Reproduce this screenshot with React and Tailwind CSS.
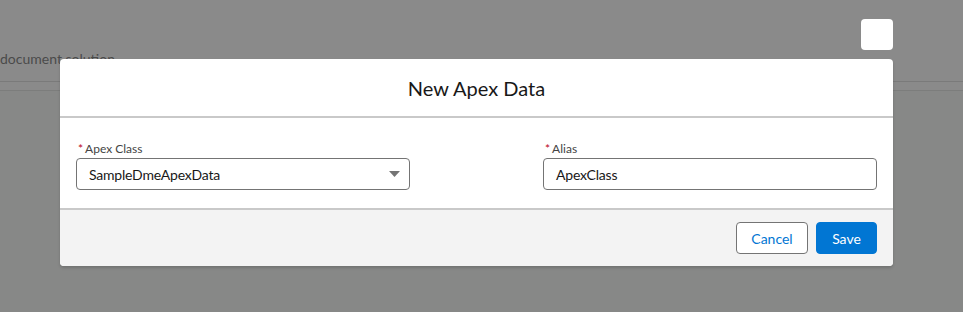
import React from "react";

export default function App() {
  const font = { fontFamily: '"Lato", "Open Sans", sans-serif' };
  return (
    <div className="relative w-[963px] h-[312px] overflow-hidden bg-[#878887]" style={font}>
      {/* background page */}
      <div className="bg-[#8a8a8a] h-[81px] pt-[49px]">
        <div className="text-[14px] leading-[20px] text-[#4a4a4a]">document solution</div>
      </div>
      <div className="h-px bg-[#7a7a7a]"></div>
      <div className="h-[8px] bg-[#8a8a8a]"></div>
      <div className="h-px bg-[#7c7d7c]"></div>

      {/* modal overlay */}
      <div className="absolute inset-0 flex flex-col items-start pl-[60px] pt-[19px]">
        <div className="w-[833px] flex flex-col">
          <div className="flex justify-end">
            <div className="w-[32px] h-[31px] bg-white rounded-[4px]"></div>
          </div>
          <div className="mt-[9px] bg-white rounded-[4px] shadow-[0_2px_3px_rgba(0,0,0,0.16)] overflow-hidden">
            <div className="h-[59px] flex items-center justify-center border-b-2 border-[#c9c9c9]">
              <h2 className="text-[20px] leading-[26px] text-[#181818] pt-[1px]">New Apex Data</h2>
            </div>
            <div className="h-[90px] px-4 pt-[22px] flex justify-between">
              <div className="w-[334px]">
                <div className="flex items-center text-[12px] leading-[18px] text-[#444444] pl-[2px]">
                  <span className="text-[#ba0517] mr-[2px]">*</span>
                  <span>Apex Class</span>
                </div>
                <div className="h-[32px] border border-[#747474] rounded-[4px] flex items-center justify-between pl-[12px] pr-[9px]">
                  <span className="text-[14px] tracking-[-0.2px] text-[#181818]">SampleDmeApexData</span>
                  <svg width="11" height="6" viewBox="0 0 11 6">
                    <path d="M0 0 L11 0 L5.5 6 Z" fill="#747474" />
                  </svg>
                </div>
              </div>
              <div className="w-[334px]">
                <div className="flex items-center text-[12px] leading-[18px] text-[#444444] pl-[2px]">
                  <span className="text-[#ba0517] mr-[2px]">*</span>
                  <span>Alias</span>
                </div>
                <div className="h-[32px] border border-[#747474] rounded-[4px] flex items-center pl-[12px]">
                  <span className="text-[14px] tracking-[-0.2px] text-[#181818]">ApexClass</span>
                </div>
              </div>
            </div>
            <div className="h-[58px] bg-[#f3f3f3] border-t-2 border-[#c9c9c9] flex items-center justify-end gap-2 px-4">
              <button className="w-[72px] h-[32px] bg-white border border-[#747474] rounded-[4px] text-[14px] text-[#0176d3]">Cancel</button>
              <button className="w-[61px] h-[32px] bg-[#0176d3] border border-[#0176d3] rounded-[4px] text-[14px] text-white">Save</button>
            </div>
          </div>
        </div>
      </div>
    </div>
  );
}
